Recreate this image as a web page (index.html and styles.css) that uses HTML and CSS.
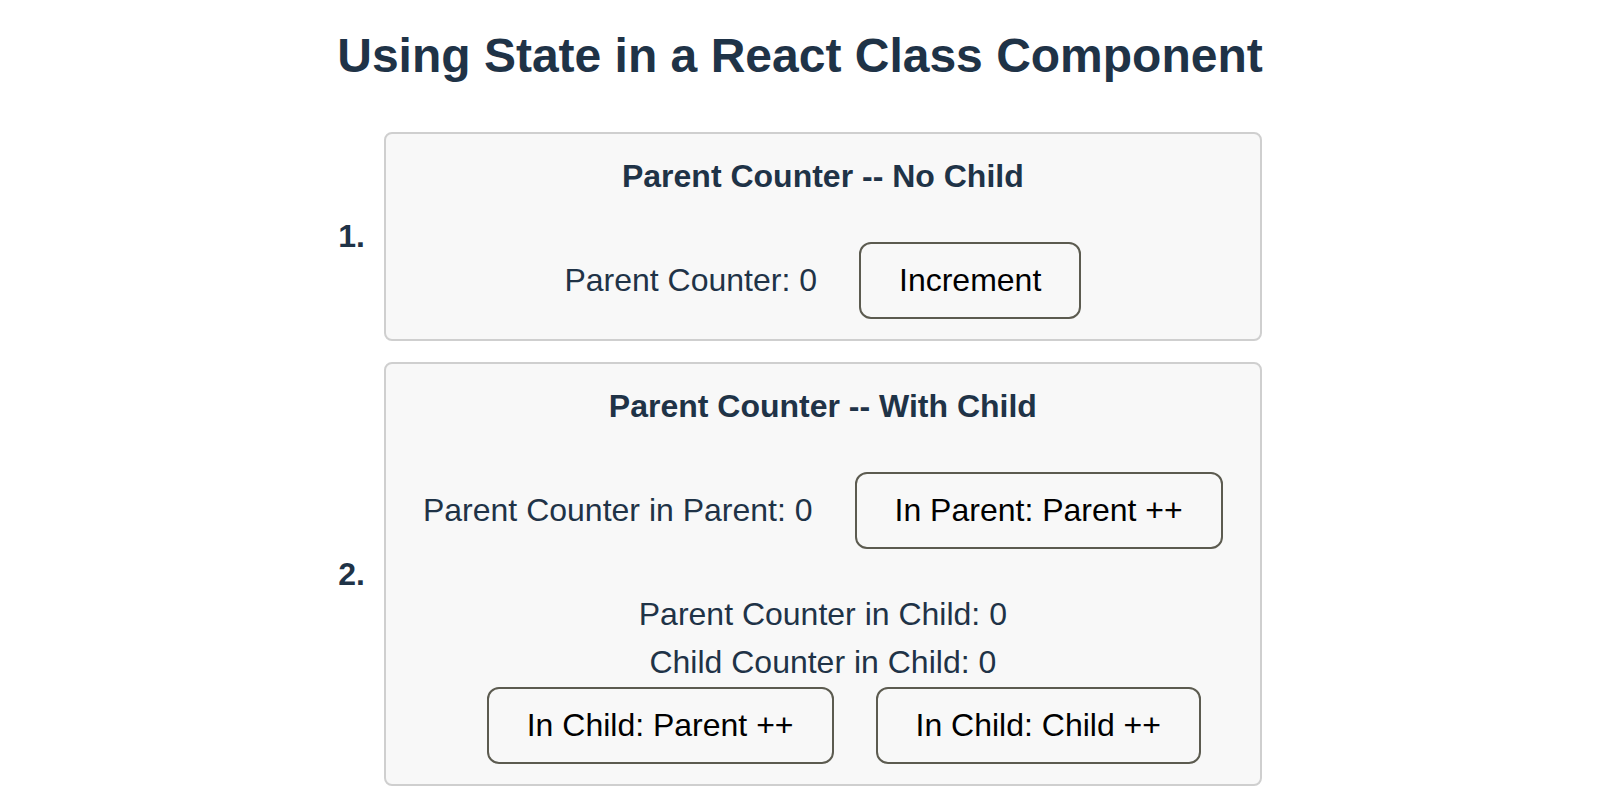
FILE: index.html
```html
<!DOCTYPE html>
<html lang="en">
<head>
<meta charset="utf-8">
<title>Using State in a React Class Component</title>
<link rel="stylesheet" href="styles.css">
</head>
<body>
<main class="page">
  <h1 class="title">Using State in a React Class Component</h1>
  <ol class="demos">
    <li class="demo">
      <span class="demo-num">1.</span>
      <section class="card">
        <h2 class="card-title">Parent Counter -- No Child</h2>
        <div class="row">
          <span class="value">Parent Counter: 0</span>
          <button class="btn" type="button">Increment</button>
        </div>
      </section>
    </li>
    <li class="demo">
      <span class="demo-num">2.</span>
      <section class="card">
        <h2 class="card-title">Parent Counter -- With Child</h2>
        <div class="row">
          <span class="value">Parent Counter in Parent: 0</span>
          <button class="btn" type="button">In Parent: Parent ++</button>
        </div>
        <div class="child">
          <p class="child-line">Parent Counter in Child: 0</p>
          <p class="child-line">Child Counter in Child: 0</p>
          <div class="row child-actions">
            <button class="btn" type="button">In Child: Parent ++</button>
            <button class="btn" type="button">In Child: Child ++</button>
          </div>
        </div>
      </section>
    </li>
  </ol>
</main>
</body>
</html>
```

FILE: styles.css
```css
body {
  margin: 0;
  font-family: "Liberation Sans", Arial, Helvetica, sans-serif;
  color: #1f3347;
  background: #ffffff;
}

.page {
  padding-top: 28px;
  display: flex;
  flex-direction: column;
  align-items: center;
}

.title {
  margin: 0 0 49px;
  font-size: 48px;
  line-height: 55px;
  font-weight: bold;
}

.demos {
  list-style: none;
  margin: 0;
  padding: 0;
  display: flex;
  flex-direction: column;
  gap: 21px;
}

.demo {
  display: flex;
  align-items: center;
  gap: 19px;
}

.demo-num {
  font-size: 32px;
  line-height: 37px;
  font-weight: bold;
}

.card {
  width: 878px;
  box-sizing: border-box;
  border: 2px solid #cfcfcf;
  border-radius: 8px;
  background: #f8f8f8;
  padding: 24px 0 20px;
  display: flex;
  flex-direction: column;
  align-items: center;
}

.card-title {
  margin: 0 0 47px;
  font-size: 32px;
  line-height: 37px;
  font-weight: bold;
}

.row {
  display: flex;
  align-items: baseline;
  justify-content: center;
  font-size: 32px;
  line-height: 37px;
}

.btn {
  margin: 0 0 0 42px;
  font-family: inherit;
  font-size: 32px;
  line-height: 37px;
  color: #000000;
  background: transparent;
  border: 2px solid #5c5b50;
  border-radius: 12px;
  padding: 18px 38px;
  cursor: pointer;
}

.child {
  margin-top: 47px;
  display: flex;
  flex-direction: column;
  align-items: center;
  gap: 11px;
}

.child-line {
  margin: 0;
  font-size: 32px;
  line-height: 37px;
}

.child-actions {
  margin-top: -5px;
}
```
